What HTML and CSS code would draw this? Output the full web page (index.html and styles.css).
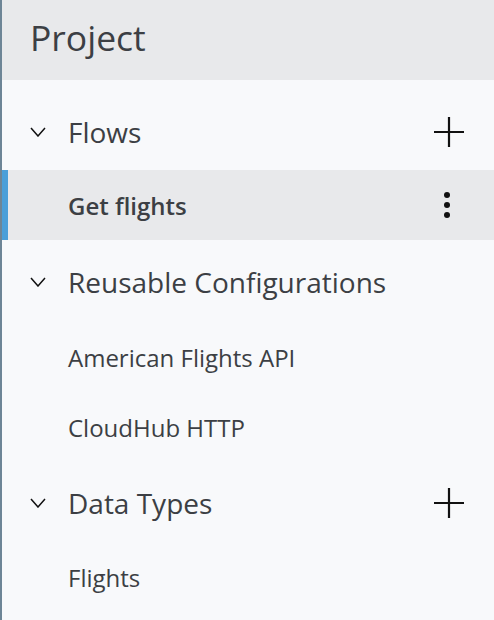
FILE: index.html
```html
<!DOCTYPE html>
<html>
<head>
<meta charset="utf-8">
<link rel="stylesheet" href="styles.css">
</head>
<body>
<aside class="panel">
  <header class="panel-header">Project</header>
  <section class="group">
    <div class="group-head">
      <svg class="chev" viewBox="0 0 16 10"><path d="M1 1l7 8 7-8" fill="none" stroke="#111" stroke-width="1.5"/></svg>
      <span class="group-title">Flows</span>
      <svg class="plus" viewBox="0 0 30 30"><path d="M15 0v30M0 15h30" stroke="#111" stroke-width="2.2"/></svg>
    </div>
    <div class="item active">
      <span class="item-label">Get flights</span>
      <span class="dots"><i></i><i></i><i></i></span>
    </div>
  </section>
  <section class="group">
    <div class="group-head">
      <svg class="chev" viewBox="0 0 16 10"><path d="M1 1l7 8 7-8" fill="none" stroke="#111" stroke-width="1.5"/></svg>
      <span class="group-title">Reusable Configurations</span>
    </div>
    <div class="item"><span class="item-label">American Flights API</span></div>
    <div class="item"><span class="item-label">CloudHub HTTP</span></div>
  </section>
  <section class="group">
    <div class="group-head">
      <svg class="chev" viewBox="0 0 16 10"><path d="M1 1l7 8 7-8" fill="none" stroke="#111" stroke-width="1.5"/></svg>
      <span class="group-title">Data Types</span>
      <svg class="plus" viewBox="0 0 30 30"><path d="M15 0v30M0 15h30" stroke="#111" stroke-width="2.2"/></svg>
    </div>
    <div class="item"><span class="item-label">Flights</span></div>
  </section>
</aside>
</body>
</html>
```
FILE: styles.css
```css
html, body { margin: 0; padding: 0; }
body {
  font-family: "Open Sans", "Liberation Sans", sans-serif;
  color: #3c3f44;
  background: #f8f9fb;
}
.panel {
  width: 492px;
  height: 620px;
  border-left: 2px solid #6d8596;
  background: #f8f9fb;
  overflow: hidden;
}
.panel-header {
  height: 80px;
  background: #e8e9eb;
  display: flex;
  align-items: center;
  padding-left: 28px;
  font-size: 35.5px;
  box-sizing: border-box;
  padding-bottom: 6px;
}
.group-head {
  height: 90px;
  display: flex;
  align-items: center;
  padding: 0 30px 0 28px;
  box-sizing: border-box;
  padding-top: 14px;
}
.group + .group .group-head { height: 82px; padding-top: 2px; }
.group:last-child .group-head { height: 80px; }
.chev { width: 16px; height: 10px; margin-right: 22px; }
.group-title { font-size: 28px; flex: 1; }
.plus { width: 30px; height: 30px; }
.item {
  height: 70px;
  display: flex;
  align-items: center;
  padding: 0 30px 0 66px;
  position: relative;
}
.item-label { font-size: 24px; flex: 1; }
.item.active { background: #e8e9eb; }
.item.active::before {
  content: "";
  position: absolute;
  left: -2px; top: 0; bottom: 0;
  width: 8px;
  background: #4a9fd9;
}
.item.active .item-label { font-weight: 600; font-size: 24px; }
.dots {
  display: flex;
  flex-direction: column;
  gap: 4px;
  margin-right: 14px;
}
.dots i { width: 6px; height: 6px; border-radius: 50%; background: #111; display: block; }
```
